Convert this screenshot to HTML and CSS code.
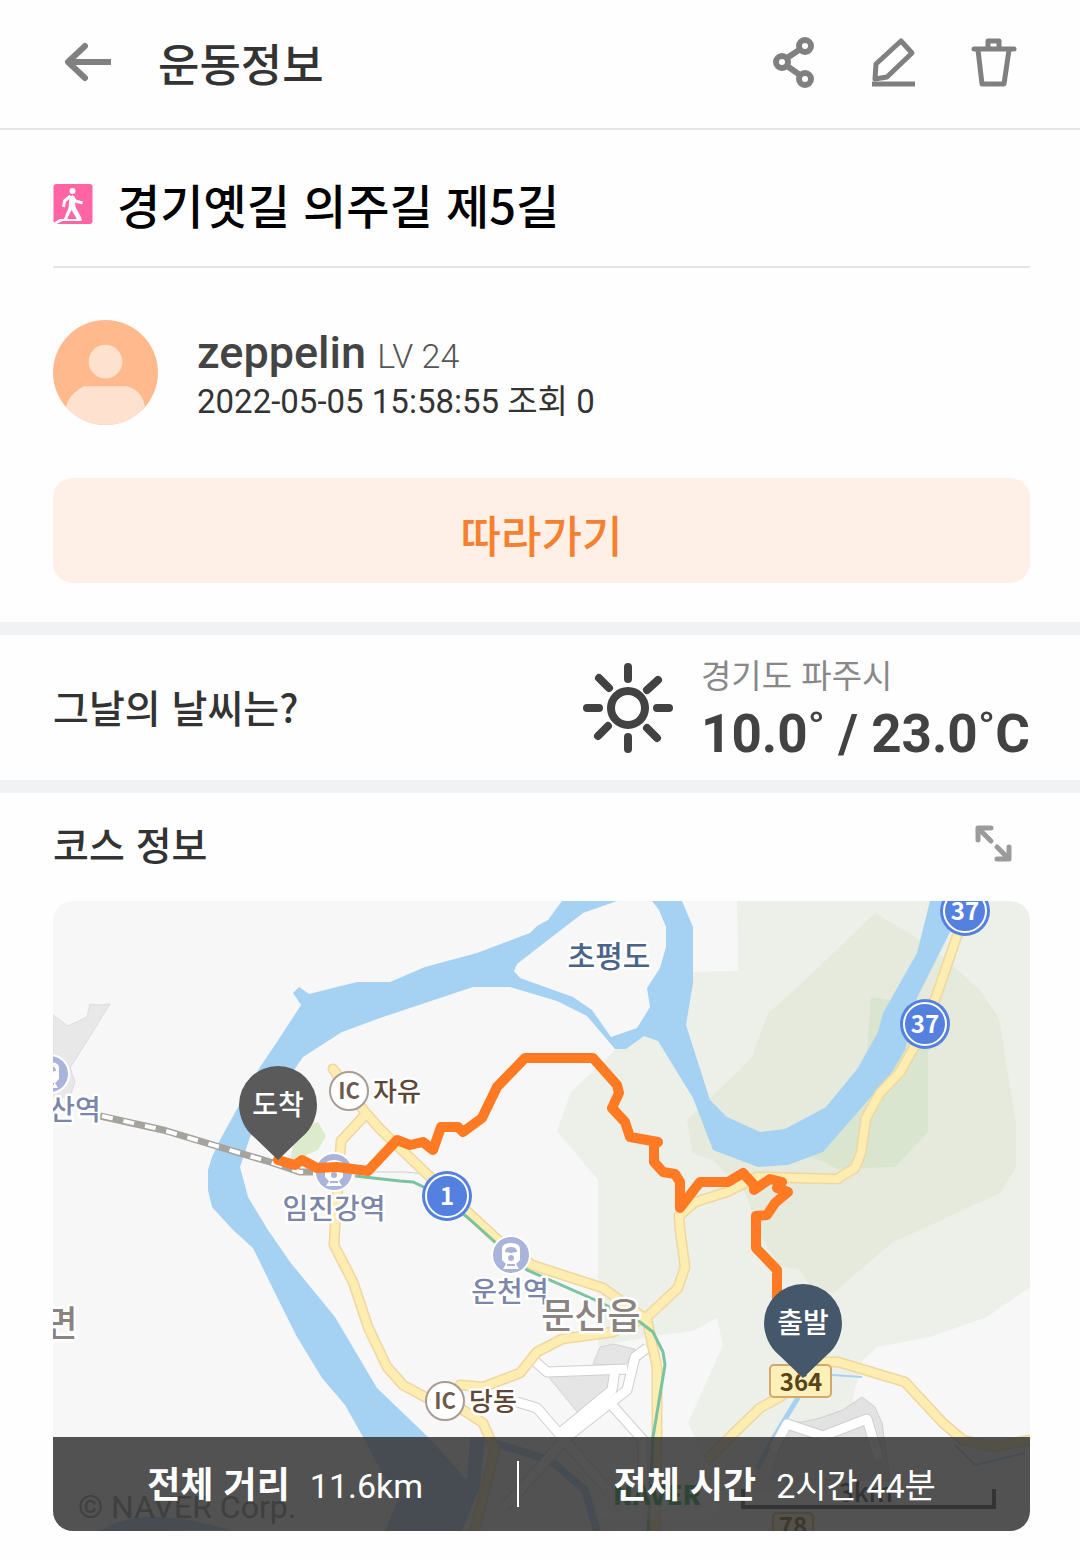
FILE: index.html
```html
<!DOCTYPE html>
<html lang="ko">
<head>
    <meta charset="UTF-8">
    <meta name="viewport" content="width=device-width, initial-scale=1">
    <title>운동정보</title>
    <link rel="stylesheet" href="styles.css">
</head>
<body>

<header class="topbar">
    <button type="button" class="icon-btn" aria-label="뒤로">
        <svg viewBox="0 0 60 60" fill="none" stroke="#808080" stroke-width="6" stroke-linejoin="round">
            <path d="M27 15L10 31l17 16" stroke-linecap="round"/>
            <path d="M11 31h42"/>
        </svg>
    </button>
    <h1>운동정보</h1>
    <button type="button" class="icon-btn" aria-label="공유">
        <svg viewBox="0 0 60 60" fill="none" stroke="#808080" stroke-width="6">
            <circle cx="41" cy="15" r="6"/>
            <circle cx="18" cy="31" r="6"/>
            <circle cx="41" cy="48" r="6"/>
            <path d="M23 27l12-8M23 35l13 9"/>
        </svg>
    </button>
    <button type="button" class="icon-btn" aria-label="수정">
        <svg viewBox="0 0 60 60" fill="none" stroke="#808080" stroke-width="5" stroke-linejoin="round">
            <path d="M37 10l11 12-25 24-12 2 1-15z"/>
            <path d="M8 53h43"/>
        </svg>
    </button>
    <button type="button" class="icon-btn" aria-label="삭제">
        <svg viewBox="0 0 60 60" fill="none" stroke="#808080" stroke-width="5" stroke-linejoin="round">
            <path d="M10 18h40" stroke-linecap="round"/>
            <path d="M24 17v-7h11v7"/>
            <path d="M14 19l4 34h22l5-34"/>
        </svg>
    </button>
</header>

<main>
    <section class="summary">
        <div class="title">
            <svg class="walk" viewBox="0 0 39 40">
                <rect width="39" height="40" rx="3" fill="#ff64a3"/>
                <circle cx="19" cy="7" r="3" fill="#fff"/>
                <path d="M17 12l-6 5-1 6M18 12l4 5 7 2M18 12v10" fill="none" stroke="#fff" stroke-width="3" stroke-linejoin="round"/>
                <path d="M16 12h5l1 11 6 11v2h-4l-6-10-5 10h-3l5-12z" fill="#fff"/>
                <path d="M0 39l6-4h22v2H9l-6 3H0z" fill="#fff"/>
            </svg>
            <h2>경기옛길 의주길 제5길</h2>
        </div>
        <div class="user">
            <svg class="avatar" viewBox="0 0 106 106">
                <clipPath id="avatar-clip"><circle cx="53" cy="53" r="53"/></clipPath>
                <g clip-path="url(#avatar-clip)">
                    <path d="M0 0h106v106H0z" fill="#ffb98c"/>
                    <circle cx="53" cy="42" r="17" fill="#ffe1cf"/>
                    <path d="M13 88q2-12 18-21h44q16 5 18 22v20H13z" fill="#ffe1cf"/>
                </g>
            </svg>
            <div>
                <p class="name">zeppelin <span>LV 24</span></p>
                <p class="date">2022-05-05 15:58:55 조회 0</p>
            </div>
        </div>
        <button type="button" class="follow">따라가기</button>
    </section>

    <section class="weather">
        <h3>그날의 날씨는?</h3>
        <svg class="sun" viewBox="0 0 90 90" fill="none" stroke="#424242" stroke-width="8" stroke-linecap="round">
            <circle cx="45" cy="45" r="17"/>
            <path d="M45 4v12M45 74v12M4 45h12M74 45h12M16 15l10 10M75 17L64 27M15 73l10-10M64 65l10 10"/>
        </svg>
        <div class="reading">
            <p class="city">경기도 파주시</p>
            <p class="temp">10.0˚ / 23.0˚C</p>
        </div>
    </section>

    <section class="course">
        <div class="course-head">
            <h3>코스 정보</h3>
            <button type="button" class="icon-btn" aria-label="지도 크게 보기">
                <svg viewBox="0 0 60 60" fill="none" stroke="#9b9b9b" stroke-width="5" stroke-linecap="round" stroke-linejoin="round">
                    <path d="M27 15H14v12M15 16l12 12M45 34v12H33M44 45L33 34"/>
                </svg>
            </button>
        </div>

        <div class="map">
            <svg class="map-canvas" viewBox="53 901 977 630">
                <defs>
                    <!-- 철도역 아이콘 -->
                    <g id="station">
                        <circle r="19" fill="#aab3d9" stroke="#fff" stroke-width="2"/>
                        <path d="M-9-6q0-6 9-6t9 6v11l-4 4 3 5H-8l3-5-4-4z" fill="#fff"/>
                        <path d="M-6-3q0-5 6-5t6 5l-6 1z" fill="#aab3d9"/>
                        <circle cy="3" r="3" fill="#aab3d9"/>
                        <path d="M-4 10h8" stroke="#aab3d9" stroke-width="2"/>
                    </g>
                    <g id="shield">
                        <circle r="25" fill="#5480e0"/>
                        <circle r="21" fill="none" stroke="#fff" stroke-width="2"/>
                    </g>
                    <path id="pin" d="M0 55L-24 32C-34 24-39 11-39 0A39 39 0 0 1 39 0C39 11 34 24 24 32z"/>
                </defs>

                <path d="M53 901h977v630H53z" fill="#f7f7f7"/>

                <!-- 녹지 -->
                <path d="M737 901h293v386l-43 30-57 20-53 10-14 13-10 37 2 94H720l-32-68 35-78-6-27-24 13-33 4-62 11V1180l-41-49 14-39 45-43 25-76 97-2z" fill="#ecf0e9"/>
                <path d="M875 913l42 25 26 19 37 33 19 28 17 105v45l-16 25-80 37-27 12-60 51-20-3-13-20-23-5-15-28-17-44-32-33-21-7-5-33 53-50 12-13 16-44 32-28z" fill="#e5eadc"/>
                <path d="M871 997l57 8v127l-33 35-58 2-24-12 54-107z" fill="#dae5cf"/>
                <path d="M296 1130l22-8 8 14-8 14-28 12z" fill="#dcebcb"/>

                <!-- 강 -->
                <path d="M363 1437l-18-32-23-27-25-41-22-44-22-45-20-18-21-23-4-17v-20l4-13 8-17 40-73 17-25 24-37-8-12 6-6 10 7 48-12h33l35-15 52-14 53-20 7-7 11-6 14-19h120l11 26v56l-7 42 24 75 17 17 33 15 25-3 41-22 32-39 20-36 5-19 34-60 13-52h25l-5 31-33 66-12 52-13 22-15 18-54 62-35 13-30 2-45-17-20-52-35-57-14-5-18 13h-11l-28-33-30-15-47-14h-37l-93 31-38 14-39 25-18 26-35 54-10 30 8 30 20 33 22 32 45 55 42 71 51 49 39 43 3-43 15 0-5 50-18 44H385l12-30z" fill="#a5d2f2"/>
                <path d="M617 901l-34 12-26 20-40 31-3 7 6 7 53 19 19 13 19 27 26-9 13-21-3-19 13-20 6-21v-20l-7-17-7-9z" fill="#f7f7f7"/>
                <path d="M100 1531q40-28 130-1z" fill="#a5d2f2"/>
                <path d="M490 1442l60 18 35 30 12 41" fill="none" stroke="#a5d2f2" stroke-width="8"/>
                <path d="M799 1396l-26 43-16 30" fill="none" stroke="#a5d2f2" stroke-width="5"/>
                <path d="M832 1375l30 2M955 1445l20 20 50-12" fill="none" stroke="#a5d2f2" stroke-width="2"/>

                <!-- 시가지 -->
                <path d="M53 1015l15 11 19-9 3-13q10 2 20 0l-40 64 5 14-5 15H53z" fill="#e8e8e8" stroke="#dcdcdc"/>
                <path d="M547 1375l63-2-3 17-29 23zM593 1364l7-17 13-3 22 5-10 17z" fill="#e5e5e5" stroke="#d4d4d4"/>
                <path d="M803 1422l17-4 23-8 19-13 13 10 7 16 8 57H770l17-58z" fill="#e2e2e2" stroke="#cfcfcf"/>
                <g fill="none" stroke-linejoin="round">
                    <path class="street-line" d="M528 1355l19 17 80-3M647 1348l-12 9-8 33-60 47-62 70M615 1370l-3 20-52 43M517 1402l20 6 25 29 60 70M610 1403l33 37v40M773 1450l14-26 36 12 44-17 12 40"/>
                    <path class="street" d="M528 1355l19 17 80-3M647 1348l-12 9-8 33-60 47-62 70M615 1370l-3 20-52 43M517 1402l20 6 25 29 60 70M610 1403l33 37v40M773 1450l14-26 36 12 44-17 12 40"/>
                </g>
                <path d="M345 1172l60 0 30 3" fill="none" stroke="#cfcfcf"/>

                <!-- 도로 -->
                <g fill="none" stroke-linecap="round" stroke-linejoin="round">
                    <g class="road-line">
                        <path d="M333 1069l32 43 15 17 48 46 45 42 25 23 34 25 71 23 44 32 10 47v70l-2 94"/>
                        <path d="M365 1115l-24 26-2 30-4 56-1 18 19 37 15 45 19 40 16 18 22 12 38 13 20 13 12 27-20 80"/>
                        <path d="M460 1385l23 2 37-14 17-21 25-13 51-7 34-15 31-29 7-21-5-37-1-14 16-14 32-10 30-15 80 2 18-11 6-15 5-35 14-25 20-21 18-32 17-40 23-67 7-22"/>
                        <path d="M710 1457l20-20 30-29 20-11 20-17 25-18h13l67 20 38 41 20 17 30 7 37-7"/>
                    </g>
                    <g class="road">
                        <path d="M333 1069l32 43 15 17 48 46 45 42 25 23 34 25 71 23 44 32 10 47v70l-2 94"/>
                        <path d="M365 1115l-24 26-2 30-4 56-1 18 19 37 15 45 19 40 16 18 22 12 38 13 20 13 12 27-20 80"/>
                        <path d="M460 1385l23 2 37-14 17-21 25-13 51-7 34-15 31-29 7-21-5-37-1-14 16-14 32-10 30-15 80 2 18-11 6-15 5-35 14-25 20-21 18-32 17-40 23-67 7-22"/>
                        <path d="M710 1457l20-20 30-29 20-11 20-17 25-18h13l67 20 38 41 20 17 30 7 37-7"/>
                    </g>
                </g>

                <!-- 철도 -->
                <path d="M355 1176l45 5 13 1 17 8 37 27 28 25 32 28 66 29 47 23 13 10 10 20 2 13-12 72-5 94" fill="none" stroke="#79c3a0" stroke-width="3"/>
                <g fill="none">
                    <path d="M100 1116l63 14 60 18 47 14 30 10h13" stroke="#a5a39e" stroke-width="7"/>
                    <path d="M102 1116l61 14 60 18 47 14 30 10h13" stroke="#fff" stroke-width="4" stroke-dasharray="11 11"/>
                </g>

                <use href="#station" x="50" y="1074"/>
                <use href="#station" x="334" y="1172"/>
                <use href="#station" x="511" y="1255"/>
                <g fill="#fff" stroke="#a79c96" stroke-width="2">
                    <circle cx="349" cy="1091" r="19"/>
                    <circle cx="445" cy="1401" r="19"/>
                </g>
                <use href="#shield" x="965" y="911"/>
                <use href="#shield" x="925" y="1024"/>
                <use href="#shield" x="447" y="1196"/>
                <rect x="770" y="1365" width="61" height="32" rx="4" fill="#fdf0b8" stroke="#d3a96b" stroke-width="2"/>
                <rect x="773" y="1513" width="40" height="30" rx="4" fill="#fdf0b8" stroke="#d3a96b" stroke-width="2"/>

                <g class="label">
                    <g class="shield-no">
                        <text x="965" y="920">37</text>
                        <text x="925" y="1033">37</text>
                        <text x="447" y="1205">1</text>
                    </g>
                    <g class="ic">
                        <text x="349" y="1099">IC</text>
                        <text x="445" y="1409">IC</text>
                    </g>
                    <g class="ic-name">
                        <text x="397" y="1101">자유</text>
                        <text x="493" y="1411">당동</text>
                    </g>
                    <g class="station-name">
                        <text x="75" y="1120">산역</text>
                        <text x="334" y="1219">임진강역</text>
                        <text x="510" y="1302">운천역</text>
                    </g>
                    <g class="town">
                        <text x="61" y="1337">면</text>
                        <text x="591" y="1329">문산읍</text>
                    </g>
                    <text class="island" x="609" y="967">초평도</text>
                    <g class="road-no">
                        <text x="801" y="1391">364</text>
                        <text x="793" y="1535">78</text>
                    </g>
                    <rect x="597" y="1483" width="120" height="34" rx="16" fill="#fff" opacity=".4"/>
                    <text class="naver" x="657" y="1505">NAVER</text>
                    <text class="scale" x="866" y="1502">3km</text>
                    <text class="copy" x="187" y="1518">© NAVER Corp.</text>
                </g>
                <path d="M743 1489v18h251v-18" fill="none" stroke="#000" stroke-width="4" opacity=".8"/>

                <!-- 이동 경로 -->
                <path class="route" d="M278 1160l17 5 7-5 15 8 20-1 31 4 29-31 13 5 13-3 10 8 8-23h17l5 5 19-14 15-31 28-29h68l24 27 2 8-7 15 13 14 5 15 28 5-4 3v17l9 10 12 2 5 8v26l20-26h28l15-9 11 12v5l16-11 12 3-5 6 11 4-13 11-8 12-11 1v32l21 22v67l20 27 5 7"/>
                <use href="#pin" x="278" y="1105" fill="#5a5a5a"/>
                <use href="#pin" x="803" y="1323" fill="#45586b"/>
                <text class="pin-text" x="278" y="1115">도착</text>
                <text class="pin-text" x="803" y="1333">출발</text>
            </svg>

            <dl class="stats">
                <div>
                    <dt>전체 거리</dt>
                    <dd>11.6km</dd>
                </div>
                <div>
                    <dt>전체 시간</dt>
                    <dd>2시간 44분</dd>
                </div>
            </dl>
        </div>
    </section>
</main>

</body>
</html>
```
FILE: styles.css
```css
* {
    box-sizing: border-box;
}

body, h1, h2, h3, p, dl, dd {
    margin: 0;
    padding: 0;
}

body {
    background: #fefefe;
    color: #333;
    font-family: Roboto, "Noto Sans CJK KR", sans-serif;
}

h1, h2, h3 {
    font-family: "Noto Sans CJK KR", sans-serif;
    font-weight: 500;
}

button {
    border: 0;
    padding: 0;
    background: none;
    cursor: pointer;
}

svg {
    display: block;
}

.icon-btn {
    width: 60px;
    height: 60px;
}

.topbar {
    display: flex;
    align-items: center;
    gap: 40px;
    height: 130px;
    padding: 0 56px 6px 58px;
    border-bottom: 2px solid #e4e4e4;
}

.topbar h1 {
    flex: 1;
    padding-top: 4px;
    font-size: 45px;
    line-height: 60px;
}

.summary {
    padding: 0 50px 39px 53px;
}

.title {
    display: flex;
    align-items: center;
    gap: 24px;
    height: 138px;
    padding-top: 12px;
    border-bottom: 2px solid #e4e4e4;
}

.title .walk {
    width: 40px;
    height: 40px;
}

.title h2 {
    font-size: 47px;
    line-height: 64px;
    color: #000;
}

.user {
    display: flex;
    align-items: center;
    gap: 39px;
    padding: 52px 0 53px;
}

.user .avatar {
    width: 105px;
    height: 105px;
}

.user .name {
    padding-top: 4px;
    font-size: 45px;
    font-weight: 500;
    line-height: 52px;
    color: #444;
}

.user .name span {
    font-size: 34px;
    font-weight: 300;
    color: #555;
}

.user .date {
    font-size: 33px;
    line-height: 40px;
}

.follow {
    width: 100%;
    height: 105px;
    padding-top: 6px;
    border-radius: 20px;
    background: #fff0e7;
    color: #f58130;
    font-family: "Noto Sans CJK KR", sans-serif;
    font-size: 44px;
    font-weight: 500;
}

.weather {
    display: flex;
    align-items: center;
    height: 171px;
    padding: 0 50px 4px 53px;
    border-top: 13px solid #f0f2f4;
    border-bottom: 13px solid #f0f2f4;
}

.weather h3 {
    flex: 1;
    font-size: 39px;
}

.weather .sun {
    width: 90px;
    height: 90px;
    margin-top: 4px;
    margin-right: 28px;
}

.weather .reading {
    padding-bottom: 4px;
}

.weather .city {
    font-family: "Noto Sans CJK KR", sans-serif;
    font-size: 33px;
    font-weight: 400;
    line-height: 60px;
    color: #888;
}

.weather .temp {
    font-size: 53px;
    font-weight: 700;
    line-height: 60px;
    color: #424242;
}

.course {
    padding: 0 50px 29px 53px;
}

.course-head {
    display: flex;
    align-items: center;
    justify-content: space-between;
    height: 108px;
    padding: 0 6px 8px 0;
}

.course-head h3 {
    font-size: 39px;
}

.map {
    position: relative;
    overflow: hidden;
    border-radius: 20px;
}

.map-canvas {
    width: 100%;
    height: auto;
}

.street-line {
    stroke: #cfcfcf;
    stroke-width: 11;
}

.street {
    stroke: #fff;
    stroke-width: 9;
}

.road-line {
    stroke: #f0d6a0;
    stroke-width: 11;
}

.road {
    stroke: #fdedb0;
    stroke-width: 8;
}

.route {
    fill: none;
    stroke: #ff7a22;
    stroke-width: 10;
    stroke-linecap: round;
    stroke-linejoin: round;
}

.label {
    font-family: "Noto Sans CJK KR", sans-serif;
    font-weight: 500;
    text-anchor: middle;
    paint-order: stroke;
    stroke: #fff;
    stroke-width: 5px;
    stroke-linejoin: round;
}

.shield-no {
    font-size: 24px;
    font-weight: 700;
    fill: #fff;
    stroke: none;
}

.ic {
    font-size: 22px;
    font-weight: 700;
    fill: #6d5a50;
    stroke: none;
}

.ic-name {
    font-size: 26px;
    fill: #5e4638;
}

.station-name {
    font-size: 28px;
    fill: #7c86a8;
}

.town {
    font-size: 36px;
    fill: #8a8380;
}

.island {
    font-size: 30px;
    fill: #4a6488;
}

.road-no {
    font-size: 24px;
    font-weight: 700;
    fill: #5b4318;
    stroke: none;
}

.naver {
    font-size: 26px;
    font-weight: 900;
    fill: #00a030;
    stroke: none;
}

.scale {
    font-size: 26px;
    fill: #222;
    stroke: none;
}

.copy {
    font-family: Roboto, sans-serif;
    font-size: 32px;
    font-weight: 400;
    fill: #777;
    stroke: none;
}

.pin-text {
    font-family: "Noto Sans CJK KR", sans-serif;
    font-size: 28px;
    font-weight: 500;
    text-anchor: middle;
    fill: #fff;
}

/* 지도 위 요약 바 */
.stats {
    position: absolute;
    left: 0;
    right: 0;
    bottom: 0;
    display: flex;
    align-items: center;
    height: 94px;
    background: rgba(53, 53, 53, .85);
    color: #fff;
    font-size: 36px;
    line-height: 42px;
}

.stats div {
    flex: 1 1 auto;
    display: flex;
    align-items: baseline;
    justify-content: center;
    gap: 20px;
}

.stats div + div {
    border-left: 2px solid #fff;
}

.stats dt {
    font-family: "Noto Sans CJK KR", sans-serif;
    font-weight: 700;
}

.stats dd {
    font-size: 34px;
    font-weight: 400;
}
```
